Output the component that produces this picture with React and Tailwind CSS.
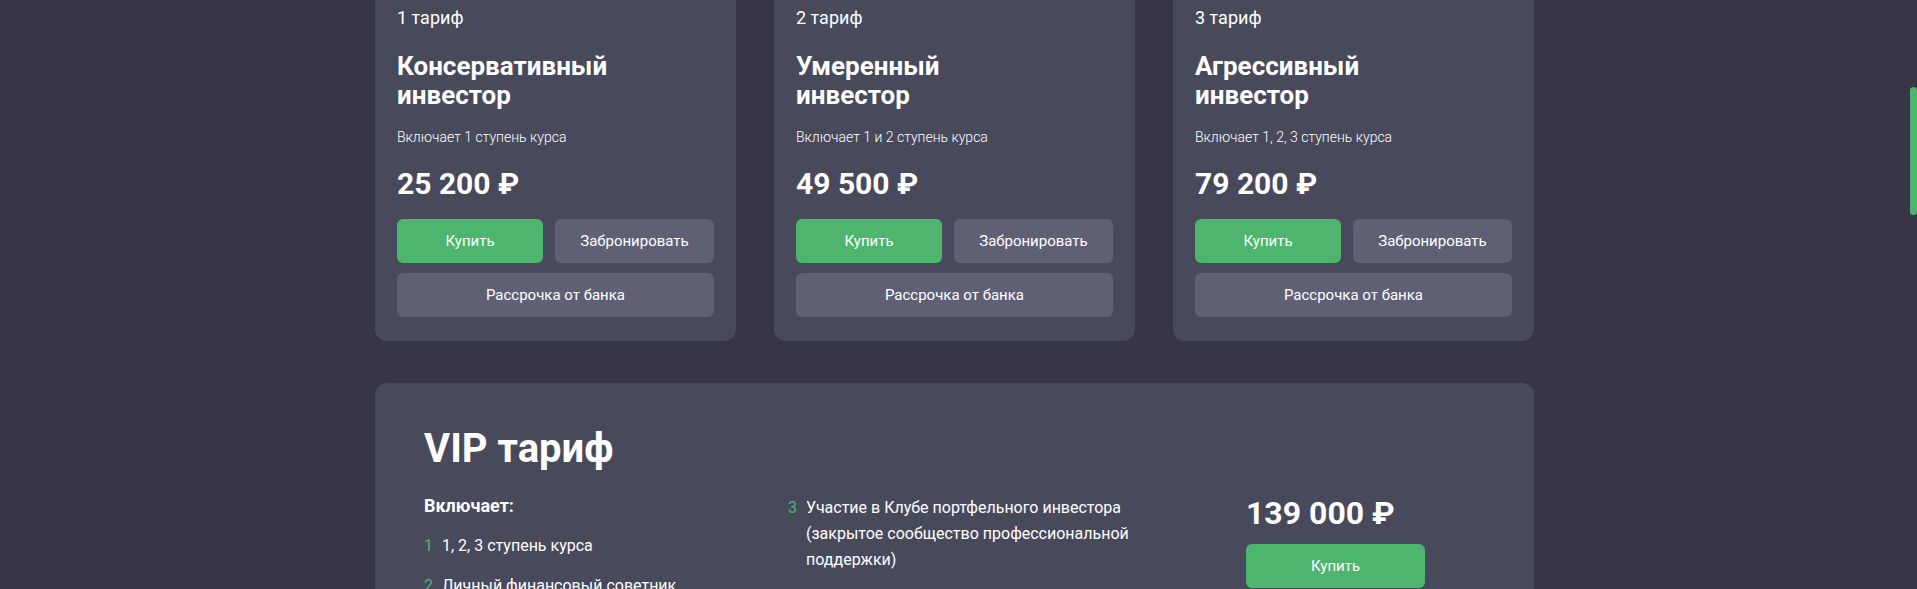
import React from "react";

const FONT = { fontFamily: "Roboto, 'Noto Sans', Arial, sans-serif" };

const tariffs = [
  { n: "1 тариф", t1: "Консервативный", t2: "инвестор", d: "Включает 1 ступень курса", p: "25 200 ₽" },
  { n: "2 тариф", t1: "Умеренный", t2: "инвестор", d: "Включает 1 и 2 ступень курса", p: "49 500 ₽" },
  { n: "3 тариф", t1: "Агрессивный", t2: "инвестор", d: "Включает 1, 2, 3 ступень курса", p: "79 200 ₽" },
];

function Card({ t }) {
  return (
    <div className="rounded-[12px] bg-[#49495c] px-[22px] pt-[24px] pb-[24px] text-white">
      <div className="text-[18px] leading-[24px] font-normal">{t.n}</div>
      <div className="mt-[22px] text-[26px] leading-[29px] font-bold">
        {t.t1}
        <br />
        {t.t2}
      </div>
      <div className="mt-[17px] text-[14px] leading-[20px] font-light">{t.d}</div>
      <div className="mt-[19px] text-[30px] leading-[36px] font-bold">{t.p}</div>
      <div className="mt-[17px] grid grid-cols-[146px_1fr] gap-x-[12px] gap-y-[10px]">
        <button className="h-[44px] rounded-[6px] bg-[#4db56e] text-[15px] text-white">Купить</button>
        <button className="h-[44px] rounded-[6px] bg-[#606075] text-[15px] text-white">Забронировать</button>
        <button className="col-span-2 h-[44px] rounded-[6px] bg-[#606075] text-[15px] text-white">
          Рассрочка от банка
        </button>
      </div>
    </div>
  );
}

function Item({ n, children }) {
  return (
    <div className="flex text-[16px] leading-[26px] text-white">
      <span className="w-[18px] shrink-0 text-[#4db56e]">{n}</span>
      <span>{children}</span>
    </div>
  );
}

export default function App() {
  return (
    <div className="relative h-screen w-full overflow-hidden bg-[#373646]" style={FONT}>
      <div className="mr-[8px]">
        <div className="mx-auto w-[1159px] -mt-[18px]">
          <div className="grid grid-cols-3 gap-[38px]">
            {tariffs.map((t) => (
              <Card key={t.n} t={t} />
            ))}
          </div>
          <div className="mt-[42px] rounded-[12px] bg-[#49495c] px-[49px] pt-[42px] pb-[40px] text-white">
            <div className="text-[40px] leading-[48px] font-bold">VIP тариф</div>
            <div className="mt-[21px] flex">
              <div className="w-[364px] shrink-0">
                <div className="text-[18px] leading-[24px] font-bold">Включает:</div>
                <div className="mt-[15px] flex flex-col gap-[14px]">
                  <Item n="1">1, 2, 3 ступень курса</Item>
                  <Item n="2">Личный финансовый советник</Item>
                </div>
              </div>
              <div className="w-[458px] shrink-0 pt-[1px]">
                <div className="max-w-[345px]">
                  <Item n="3">
                    Участие в Клубе портфельного инвестора (закрытое сообщество профессиональной поддержки)
                  </Item>
                </div>
              </div>
              <div className="flex-1">
                <div className="text-[32px] leading-[38px] font-bold">139 000 ₽</div>
                <button className="mt-[12px] h-[44px] w-[179px] rounded-[6px] bg-[#4db56e] text-[15px] text-white">
                  Купить
                </button>
              </div>
            </div>
          </div>
        </div>
      </div>
      <div className="absolute right-0 top-[87px] h-[128px] w-[7px] rounded-[4px] bg-[#4db56e]" />
    </div>
  );
}
